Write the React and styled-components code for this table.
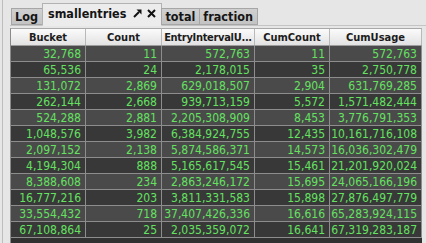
import React from "react";
import styled, { createGlobalStyle } from "styled-components";

const GlobalStyle = createGlobalStyle`
  * {
    margin: 0;
    padding: 0;
    box-sizing: border-box;
  }
  html, body {
    width: 426px;
    height: 243px;
    overflow: hidden;
    background: #e6e6e6;
    font-family: "DejaVu Sans Condensed", "DejaVu Sans", sans-serif;
  }
`;

const columns = [
  { key: "bucket", title: "Bucket", width: 75 },
  { key: "count", title: "Count", width: 76 },
  { key: "interval", title: "EntryIntervalU...", width: 93 },
  { key: "cumCount", title: "CumCount", width: 75 },
  { key: "cumUsage", title: "CumUsage", width: 92 },
];

const rows = [
  ["32,768", "11", "572,763", "11", "572,763"],
  ["65,536", "24", "2,178,015", "35", "2,750,778"],
  ["131,072", "2,869", "629,018,507", "2,904", "631,769,285"],
  ["262,144", "2,668", "939,713,159", "5,572", "1,571,482,444"],
  ["524,288", "2,881", "2,205,308,909", "8,453", "3,776,791,353"],
  ["1,048,576", "3,982", "6,384,924,755", "12,435", "10,161,716,108"],
  ["2,097,152", "2,138", "5,874,586,371", "14,573", "16,036,302,479"],
  ["4,194,304", "888", "5,165,617,545", "15,461", "21,201,920,024"],
  ["8,388,608", "234", "2,863,246,172", "15,695", "24,065,166,196"],
  ["16,777,216", "203", "3,811,331,583", "15,898", "27,876,497,779"],
  ["33,554,432", "718", "37,407,426,336", "16,616", "65,283,924,115"],
  ["67,108,864", "25", "2,035,359,072", "16,641", "67,319,283,187"],
];

const gridColumns = columns.map((c) => `${c.width}px`).join(" ");

const Frame = styled.div`
  height: 243px;
  margin-left: 2px;
  border-left: 1px solid #bdbdbd;
  padding-left: 7px;
  display: flex;
  flex-direction: column;
`;

const TabBar = styled.div`
  height: 26px;
  display: flex;
  align-items: flex-end;
  padding-left: 1px;
  border-bottom: 1px solid #c4c4c4;
`;

const Tab = styled.div`
  height: ${(p) => (p.$active ? 23 : 17)}px;
  margin-bottom: ${(p) => (p.$active ? -1 : 0)}px;
  display: flex;
  align-items: center;
  padding: ${(p) => (p.$active ? "0 5px 2px 5px" : "0 4px 0 3px")};
  background: ${(p) =>
    p.$active ? "#ececec" : "linear-gradient(#d0d0d0, #c3c3c3)"};
  border: 1px solid ${(p) => (p.$active ? "#b2b2b2" : "#a6a6a6")};
  border-bottom: ${(p) => (p.$active ? "1px solid #ececec" : "1px solid #a6a6a6")};
  margin-right: -1px;
  font-size: 12.5px;
  font-weight: bold;
  color: #151515;
  white-space: nowrap;
`;

const TabIcons = styled.span`
  display: flex;
  align-items: center;
  gap: 5px;
  margin-left: 7px;
`;

const Panel = styled.div`
  flex: 1;
  padding-top: 2px;
  display: flex;
  flex-direction: column;
  min-height: 0;
`;

const Table = styled.div`
  flex: 1;
  width: 412px;
  display: flex;
  flex-direction: column;
  border-left: 1px solid #8a8a8a;
  border-top: 1px solid #a8a8a8;
  background: #313131;
  min-height: 0;
`;

const HeaderRow = styled.div`
  display: grid;
  grid-template-columns: ${gridColumns};
  height: 17px;
  background: linear-gradient(#fbfbfb, #e2e2e2);
  border-bottom: 1px solid #9c9c9c;
`;

const HeaderCell = styled.div`
  display: flex;
  align-items: center;
  justify-content: center;
  border-right: 1px solid #b9b9b9;
  font-size: 11px;
  font-weight: bold;
  letter-spacing: ${(p) => (p.$tight ? "-0.3px" : "0")};
  color: #1c1c1c;
  white-space: nowrap;
`;

const Row = styled.div`
  display: grid;
  grid-template-columns: ${gridColumns};
  height: 16px;
  background: ${(p) => (p.$odd ? "#383838" : "#4a4a4a")};
  border-bottom: 1px solid #8d8d8d;
`;

const Cell = styled.div`
  display: flex;
  align-items: center;
  justify-content: flex-end;
  padding-right: 4px;
  border-right: 1px solid #8d8d8d;
  font-size: 12px;
  color: #64e260;
  white-space: nowrap;
  overflow: hidden;
`;

const PinIcon = () => (
  <svg width="9" height="9" viewBox="0 0 9 9">
    <polygon points="3.5,0.5 8.5,0.5 8.5,5.5" fill="#111" />
    <line x1="1" y1="8" x2="6" y2="3" stroke="#111" strokeWidth="2" />
  </svg>
);

const CloseIcon = () => (
  <svg width="9" height="9" viewBox="0 0 9 9">
    <path d="M1 1 L8 8 M8 1 L1 8" stroke="#111" strokeWidth="2" />
  </svg>
);

export default function App() {
  return (
    <>
      <GlobalStyle />
      <Frame>
        <TabBar>
          <Tab>Log</Tab>
          <Tab $active>
            smallentries
            <TabIcons>
              <PinIcon />
              <CloseIcon />
            </TabIcons>
          </Tab>
          <Tab>total</Tab>
          <Tab>fraction</Tab>
        </TabBar>
        <Panel>
          <Table>
            <HeaderRow>
              {columns.map((c) => (
                <HeaderCell key={c.key} $tight={c.key === "interval"}>
                  {c.title}
                </HeaderCell>
              ))}
            </HeaderRow>
            {rows.map((r, i) => (
              <Row key={r[0]} $odd={i % 2 === 1}>
                {r.map((v, j) => (
                  <Cell key={columns[j].key}>{v}</Cell>
                ))}
              </Row>
            ))}
          </Table>
        </Panel>
      </Frame>
    </>
  );
}
